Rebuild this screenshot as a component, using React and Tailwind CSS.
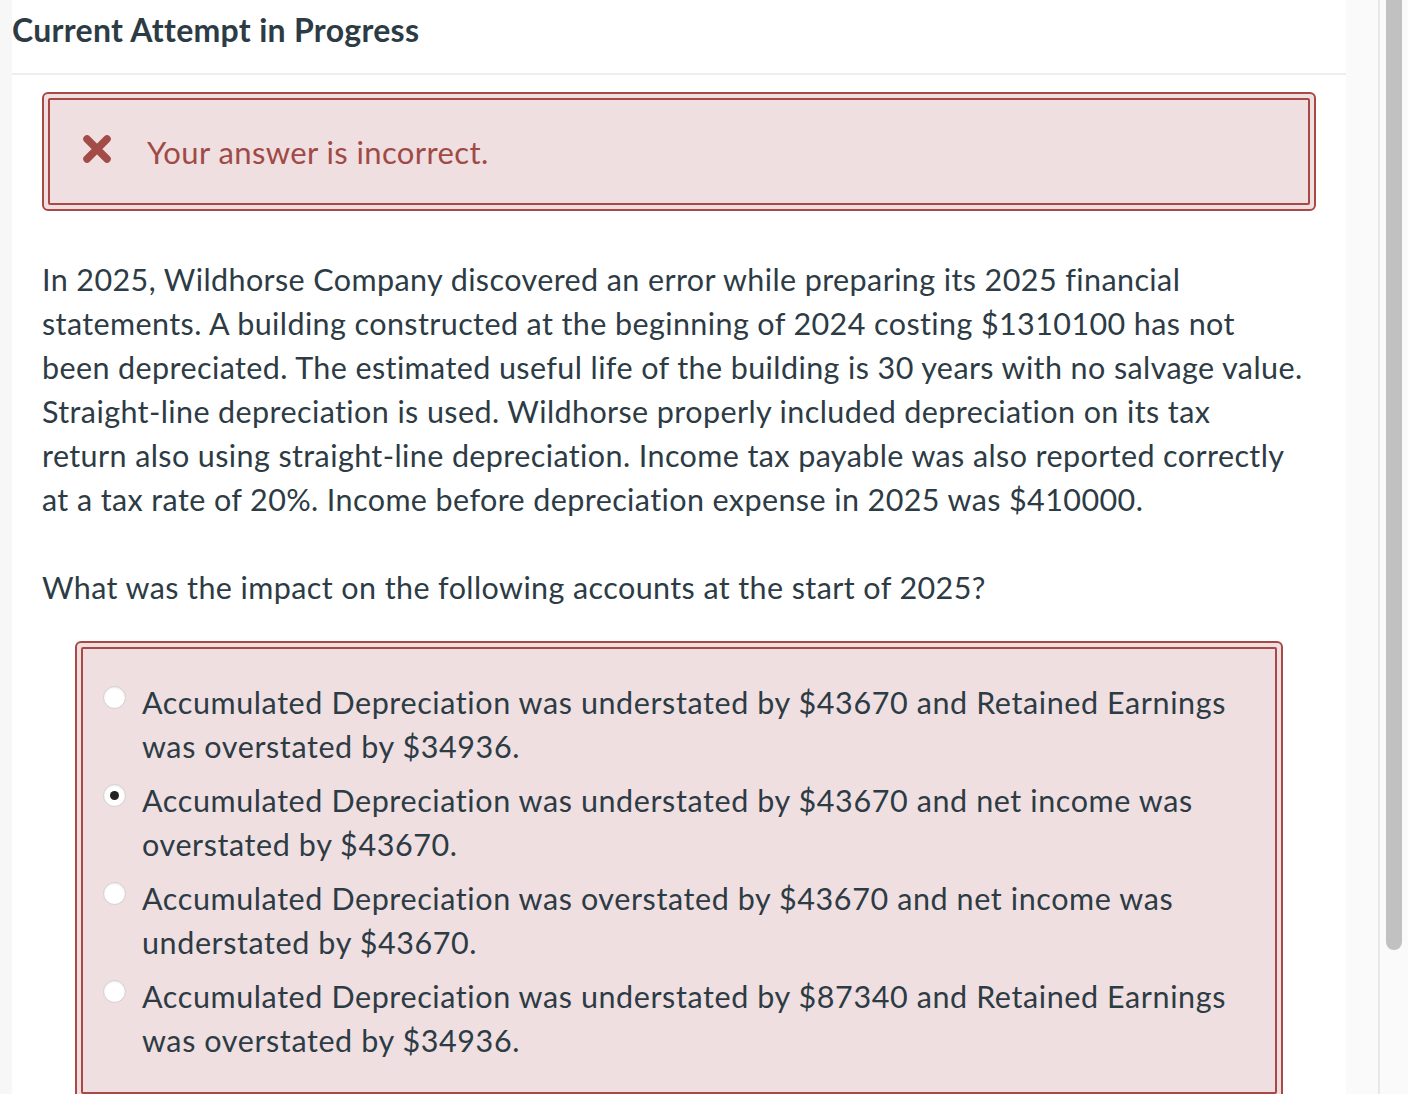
export default function App() {
  const options = [
    { text: 'Accumulated Depreciation was understated by $43670 and Retained Earnings was overstated by $34936.', checked: false },
    { text: 'Accumulated Depreciation was understated by $43670 and net income was overstated by $43670.', checked: true },
    { text: 'Accumulated Depreciation was overstated by $43670 and net income was understated by $43670.', checked: false },
    { text: 'Accumulated Depreciation was understated by $87340 and Retained Earnings was overstated by $34936.', checked: false },
  ];

  return (
    <div
      className="flex w-[1408px] h-[1094px] overflow-hidden bg-white text-[#2d3b45]"
      style={{ fontFamily: 'Lato, "Open Sans", sans-serif' }}
    >
      {/* left gutter */}
      <div className="w-[12px] shrink-0 bg-[#f7f7f7]" />

      {/* main */}
      <div className="flex-1 min-w-0">
        <div className="h-[75px] border-b-2 border-[#eeeeee] pt-[8px]">
          <h1 className="text-[32px] font-bold leading-[44px] tracking-[0.3px]">Current Attempt in Progress</h1>
        </div>

        <div className="px-[30px] pt-[17px]">
          {/* feedback */}
          <div className="rounded-[6px] border-2 border-[#a84945] p-[4px] bg-[#efdfe0]">
            <div className="border-2 border-[#a84945] rounded-[2px] h-[107px] flex items-center pl-[32px] gap-[35px]">
              <svg width="30" height="30" viewBox="0 0 30 30" className="shrink-0 -mt-[6px]">
                <path d="M5 5 L25 25 M25 5 L5 25" stroke="#a34b47" strokeWidth="7.5" strokeLinecap="round" />
              </svg>
              <span className="text-[31px] leading-[44px] tracking-[0.4px] text-[#a04a47]">Your answer is incorrect.</span>
            </div>
          </div>

          <p className="mt-[46px] w-[1261px] text-[30.5px] leading-[44px] tracking-[0.4px]">
            In 2025, Wildhorse Company discovered an error while preparing its 2025 financial statements. A building constructed at the beginning of 2024 costing $1310100 has not been depreciated. The estimated useful life of the building is 30 years with no salvage value. Straight-line depreciation is used. Wildhorse properly included depreciation on its tax return also using straight-line depreciation. Income tax payable was also reported correctly at a tax rate of 20%. Income before depreciation expense in 2025 was $410000.
          </p>

          <p className="mt-[44px] text-[30.5px] leading-[44px] tracking-[0.4px]">
            What was the impact on the following accounts at the start of 2025?
          </p>

          {/* answers */}
          <div className="mx-[33px] mt-[32px] rounded-[6px] border-2 border-[#a84945] p-[4px] bg-[#efdfe0]">
            <div className="border-2 border-[#a84945] rounded-[2px] pt-[31px] pb-[30px] pl-[20px] pr-[30px] flex flex-col gap-[10px]">
              {options.map((o, i) => (
                <label key={i} className="flex items-start gap-[16px]">
                  <span className="mt-[6px] w-[23px] h-[23px] shrink-0 rounded-full bg-white border border-[#cfcfcf] shadow-[inset_0_1px_2px_rgba(0,0,0,0.08)] flex items-center justify-center">
                    {o.checked && <span className="w-[9px] h-[9px] rounded-full bg-[#222]" />}
                  </span>
                  <span className="text-[30.5px] leading-[44px] tracking-[0.6px]">{o.text}</span>
                </label>
              ))}
            </div>
          </div>
        </div>
      </div>

      {/* right side panel and scrollbar */}
      <div className="w-[32px] shrink-0 bg-[#fafafa]" />
      <div className="w-[2px] shrink-0 bg-[#e8e8e8]" />
      <div className="w-[28px] shrink-0 bg-[#fafafa] flex pl-[6px] pr-[6px]">
        <div className="w-[16px] h-[950px] bg-[#c1c1c1] rounded-b-full" />
      </div>
    </div>
  );
}
